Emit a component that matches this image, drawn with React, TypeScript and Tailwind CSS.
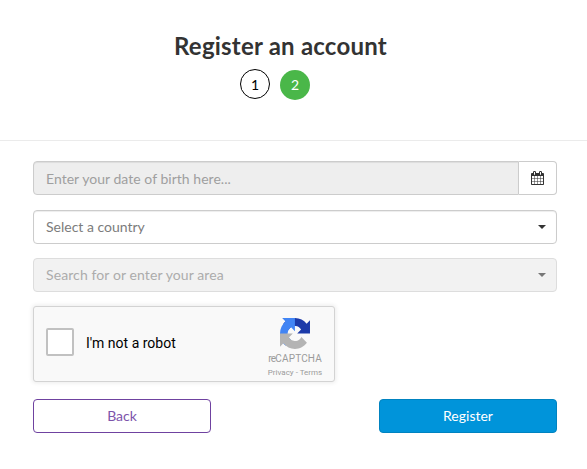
import React from "react";

function CalendarIcon() {
  return (
    <svg width="13" height="14" viewBox="64 0 1664 1792" fill="#333">
      <path d="M192 1664h288v-288h-288v288zm352 0h320v-288h-320v288zm-352-352h288v-320h-288v320zm352 0h320v-320h-320v320zm-352-384h288v-288h-288v288zm736 736h320v-288h-320v288zm-384-736h320v-288h-320v288zm768 736h288v-288h-288v288zm-384-352h320v-320h-320v320zm-352-864v-288q0-13-9.500-22.500t-22.500-9.500h-64q-13 0-22.500 9.500t-9.500 22.500v288q0 13 9.500 22.500t22.500 9.500h64q13 0 22.500-9.500t9.500-22.500zm736 864h288v-320h-288v320zm-384-384h320v-288h-320v288zm384 0h288v-288h-288v288zm32-480v-288q0-13-9.500-22.500t-22.500-9.500h-64q-13 0-22.500 9.500t-9.500 22.500v288q0 13 9.500 22.500t22.500 9.500h64q13 0 22.500-9.500t9.500-22.500zm384-64v1280q0 52-38 90t-90 38h-1408q-52 0-90-38t-38-90v-1280q0-52 38-90t90-38h128v-96q0-66 47-113t113-47h64q66 0 113 47t47 113v96h384v-96q0-66 47-113t113-47h64q66 0 113 47t47 113v96h128q52 0 90 38t38 90z" />
    </svg>
  );
}

function RecaptchaLogo() {
  return (
    <svg width="30" height="31" viewBox="0 0 64 64" preserveAspectRatio="none">
      <path fill="#1c3aa9" d="M64 31.955l-.033-1.370V4.687l-7.160 7.160C50.948 4.674 42.033.093 32.050.093c-10.400 0-19.622 4.960-25.458 12.640l11.736 11.860a15.550 15.550 0 0 1 4.754-5.334c2.050-1.600 4.952-2.906 8.968-2.906.485 0 .860.057 1.135.163 4.976.393 9.288 3.140 11.828 7.124l-8.307 8.307L64 31.953" />
      <path fill="#4285f4" d="M31.862.094l-1.370.033H4.594l7.160 7.160C4.580 13.147 0 22.060 0 32.046c0 10.400 4.960 19.622 12.640 25.458L24.500 45.768a15.550 15.550 0 0 1-5.334-4.754c-1.600-2.050-2.906-4.952-2.906-8.968 0-.485.057-.860.163-1.135.393-4.976 3.140-9.288 7.124-11.828l8.307 8.307L31.860.095" />
      <path fill="#b4b4b4" d="M.001 32.045l.033 1.370v25.898l7.160-7.160c5.860 7.173 14.774 11.754 24.760 11.754 10.400 0 19.622-4.960 25.458-12.640l-11.736-11.860a15.550 15.550 0 0 1-4.754 5.334c-2.050 1.600-4.952 2.906-8.968 2.906-.485 0-.860-.057-1.135-.163-4.976-.393-9.288-3.140-11.828-7.124l8.307-8.307c-10.522.040-22.400.066-27.295-.005" />
    </svg>
  );
}

function Caret({ className }: { className: string }) {
  return (
    <span className={`h-0 w-0 border-x-4 border-t-4 border-x-transparent ${className}`} />
  );
}

export default function App() {
  return (
    <main className="h-[469px] w-[587px] overflow-hidden bg-white font-['Lato',sans-serif] text-sm leading-5 text-[#333]">
      <header className="h-[141px] border-b border-[#ebebeb] pt-[33px]">
        <h1 className="ml-[174px] h-[26px] whitespace-nowrap text-2xl leading-[26px] font-bold tracking-[0.22px]">
          Register an account
        </h1>
        <div className="mt-[10px] ml-[240px] flex gap-[10px]">
          <span className="flex size-[30px] items-center justify-center rounded-full border border-black pt-px text-black">1</span>
          <span className="mt-px flex size-[30px] items-center justify-center rounded-full bg-[#4ab749] text-white">2</span>
        </div>
      </header>

      <form className="ml-[33px] w-[524px] pt-5" onSubmit={(e) => e.preventDefault()}>
        <div className="flex h-[34px]">
          <input
            readOnly
            placeholder="Enter your date of birth here..."
            className="min-w-0 flex-1 rounded-l border border-[#ccc] bg-[#eee] px-3 pt-[2px] tracking-[0.03px] shadow-[inset_0_1px_1px_rgba(0,0,0,0.075)] outline-none placeholder:text-[#9f9f9f]"
          />
          <button type="button" aria-label="Choose date" className="flex w-[38px] items-center justify-center rounded-r border border-l-0 border-[#ccc] bg-white">
            <CalendarIcon />
          </button>
        </div>

        <div className="mt-[15px] flex h-[34px] items-center justify-between rounded border border-[#ccc] pr-[10px] pl-3 text-[#7c7c7c] shadow-[inset_0_1px_1px_rgba(0,0,0,0.075)]">
          <span>Select a country</span>
          <Caret className="border-t-[#333]" />
        </div>

        <div className="mt-[14px] flex h-[34px] items-center justify-between rounded border border-[#ddd] bg-[#f2f2f2] pr-[10px] pl-3 text-[#acacac]">
          <span className="tracking-[0.1px]">Search for or enter your area</span>
          <Caret className="border-t-[#777]" />
        </div>

        <div className="mt-[14px] flex h-[76px] w-[302px] justify-between rounded-[3px] border border-[#d3d3d3] bg-[#f9f9f9] font-['Roboto',sans-serif] shadow-[0_0_4px_1px_rgba(0,0,0,0.08)]">
          <div className="flex pt-[21px] pl-3">
            <span className="size-7 rounded-[2px] border-2 border-[#c1c1c1] bg-white" />
            <span className="ml-3 pt-[5px] text-sm leading-5 text-black">I'm not a robot</span>
          </div>
          <div className="mr-[10px] flex w-[58px] flex-col items-center whitespace-nowrap pt-[11px] text-[#9b9b9b]">
            <RecaptchaLogo />
            <span className="mt-[5px] text-[10px] leading-[10px]"><span className="tracking-[-0.7px]">re</span><span className="tracking-[0.15px]">CAPTCHA</span></span>
            <span className="mt-[4px] text-[8px] leading-[10px]">Privacy - Terms</span>
          </div>
        </div>

        <div className="mt-[17px] flex justify-between">
          <button type="button" className="h-[34px] w-[178px] rounded border border-[#6f42a0] bg-white text-[#7d54ab]">Back</button>
          <button type="submit" className="h-[34px] w-[178px] rounded border border-[#0083c0] bg-[#0094da] text-white">Register</button>
        </div>
      </form>
    </main>
  );
}
